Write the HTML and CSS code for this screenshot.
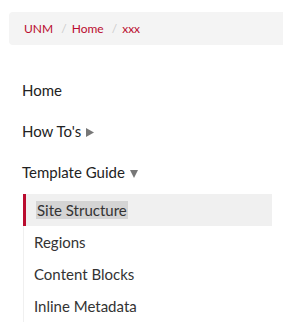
FILE: index.html
```html
<!DOCTYPE html>
<html lang="en">
<head>
    <meta charset="UTF-8">
    <meta name="viewport" content="width=device-width, initial-scale=1.0">
    <title>Template Guide - Site Structure</title>
    <link rel="stylesheet" href="styles.css">
</head>
<body>

    <ol class="breadcrumb">
        <li><a href="#">UNM</a></li>
        <li><a href="#">Home</a></li>
        <li><a href="#">xxx</a></li>
    </ol>

    <ul class="nav">
        <li><a href="#">Home</a></li>
        <li>
            <a href="#">How To's</a>
            <svg class="arrow" width="8" height="9" viewBox="0 0 8 9"><polygon points="0,0 8,4.5 0,9" /></svg>
        </li>
        <li>
            <a href="#">Template Guide</a>
            <svg class="arrow" width="8" height="8" viewBox="0 0 8 8"><polygon points="0,0 8,0 4,8" /></svg>
            <ul class="subnav">
                <li class="active"><a href="#"><span class="sel">Site Structure</span></a></li>
                <li><a href="#">Regions</a></li>
                <li><a href="#">Content Blocks</a></li>
                <li><a href="#">Inline Metadata</a></li>
            </ul>
        </li>
    </ul>

</body>
</html>
```

FILE: styles.css
```css
html, body {
    overflow: hidden;
}
body {
    font-family: 'Lato', 'Open Sans', sans-serif;
    background: white;
    color: #222;
    margin: 0;
    padding: 12px 0 0 9px;
}
a {
    text-decoration: none;
    color: inherit;
}
.breadcrumb {
    list-style: none;
    margin: 0;
    padding: 8px 15px;
    background: #f4f4f4;
    border-radius: 4px 0 0 4px;
    font-size: 12px;
    line-height: 17px;
}
.breadcrumb li {
    display: inline;
}
.breadcrumb li a {
    color: #ba0c2f;
}
.breadcrumb li + li:before {
    content: "/";
    color: #ccc;
    padding: 0 5px;
}
.nav {
    list-style: none;
    margin: 25px 0 0 0;
    padding: 0 11px 0 13px;
}
.nav > li {
    padding: 10px 0;
    font-size: 15px;
    line-height: 21px;
}
.arrow {
    fill: #777;
    margin-left: 1px;
}
.subnav {
    list-style: none;
    margin: 11px 0 0 1px;
    padding: 0;
    border-left: 1px solid #f0f0f0;
    font-size: 15px;
}
.subnav li {
    padding: 5px 0 5px 10px;
    line-height: 22px;
    color: #333;
}
.subnav li.active {
    background: #f0f0f0;
    border-left: 3px solid #ba0c2f;
    margin-left: -1px;
    padding-left: 10px;
}
.sel {
    background: #d4d4d4;
    padding: 0 1px;
}
```
